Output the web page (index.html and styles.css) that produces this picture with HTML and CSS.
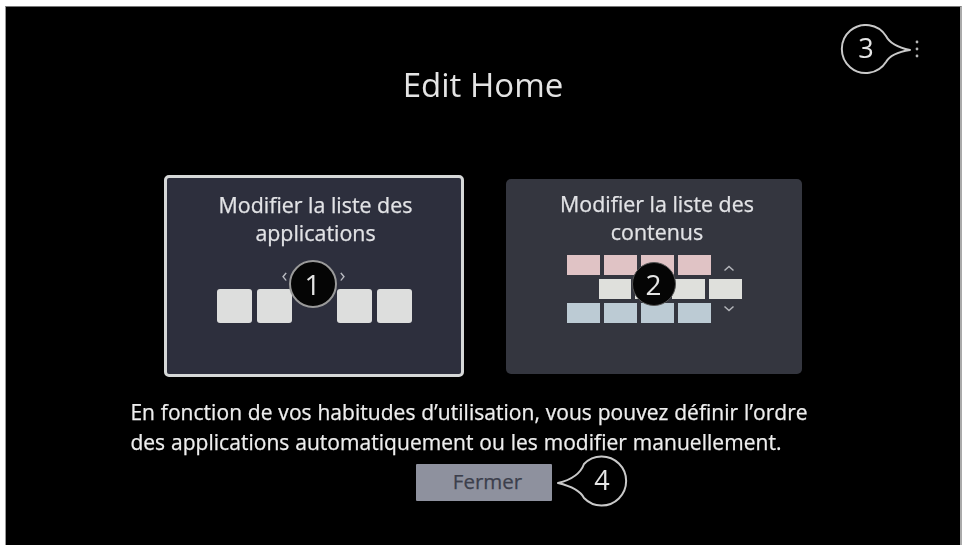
FILE: index.html
```html
<!DOCTYPE html>
<html lang="fr">
<head>
<meta charset="utf-8">
<title>Edit Home</title>
<link rel="stylesheet" href="styles.css">
</head>
<body>
<main class="screen">
  <h1 class="title">Edit Home</h1>
  <svg class="callout callout-three" width="78" height="50" viewBox="0 0 78 50">
    <path class="callout-line" d="M45 12A24 24 0 1 0 45 38Q50 29 69 26Q50 22 45 12Z"/>
    <circle class="dot" cx="76" cy="18" r="1.4"/><circle class="dot" cx="76" cy="25" r="1.4"/><circle class="dot" cx="76" cy="32" r="1.4"/>
    <text class="callout-num" x="25" y="34">3</text>
  </svg>
  <section class="cards">
    <article class="card card-selected">
      <h2 class="card-title">Modifier la liste des<br>applications</h2>
      <div class="apps">
        <span class="tile"></span><span class="tile"></span><span class="tile-gap"></span><span class="tile"></span><span class="tile"></span>
        <span class="arrow arrow-left">‹</span><span class="arrow arrow-right">›</span>
        <span class="badge badge-one">1</span>
      </div>
    </article>
    <article class="card card-plain">
      <h2 class="card-title">Modifier la liste des<br>contenus</h2>
      <div class="rows">
        <div class="row"><span class="cell pink"></span><span class="cell pink"></span><span class="cell pink"></span><span class="cell pink"></span></div>
        <div class="row row-shift"><span class="cell cream"></span><span class="cell cream"></span><span class="cell cream"></span><span class="cell cream"></span></div>
        <div class="row"><span class="cell blue"></span><span class="cell blue"></span><span class="cell blue"></span><span class="cell blue"></span></div>
        <svg class="chev chev-up" width="12" height="7" viewBox="0 0 12 7"><path d="M1.5 5.5L6 1.5L10.5 5.5"/></svg>
        <svg class="chev chev-down" width="12" height="7" viewBox="0 0 12 7"><path d="M1.5 1.5L6 5.5L10.5 1.5"/></svg>
        <span class="badge badge-two">2</span>
      </div>
    </article>
  </section>
  <p class="desc">En fonction de vos habitudes d’utilisation, vous pouvez définir l’ordre<br>des applications automatiquement ou les modifier manuellement.</p>
  <div class="actions">
    <button class="close" type="button">Fermer</button>
    <svg class="callout callout-four" width="78" height="54" viewBox="0 0 78 54">
      <path class="callout-line" d="M25 10A24.5 24.5 0 1 1 25 44Q20 34 -1 29Q20 24 25 10Z"/>
      <text class="callout-num" x="43" y="36">4</text>
    </svg>
  </div>
</main>
</body>
</html>
```
FILE: styles.css
```css
* { box-sizing: border-box; }
html, body { height: 100%; }
body {
  margin: 0;
  padding: 6px 3px 0 5px;
  background: #fff;
  overflow: hidden;
  font-family: "Open Sans", "Noto Sans", sans-serif;
}
.screen {
  position: relative;
  height: 545px;
  display: flex;
  flex-direction: column;
  align-items: center;
  background: #000;
  color: #e4e4e4;
  border-top: 1px solid #777;
  border-left: 1px solid #999;
  border-right: 2px solid #aaa;
}
.title, .cards, .desc, .actions, .callout-three { filter: blur(.45px); }
.title {
  margin: 58px 0 0;
  height: 110px;
  font-size: 33px;
  line-height: 40px;
  font-weight: 400;
}
.cards {
  display: flex;
  align-items: center;
  gap: 42px;
}
.card { display: flex; flex-direction: column; align-items: center; border-radius: 5px; }
.card-selected {
  width: 300px;
  height: 202px;
  padding-top: 13px;
  background: #2d2f3d;
  border: 3px solid #d6d8d8;
}
.card-plain {
  width: 296px;
  height: 195px;
  padding-top: 11px;
  background: #34363f;
}
.card-title {
  margin: 0;
  font-size: 21.4px;
  line-height: 28px;
  font-weight: 400;
  -webkit-text-stroke: .25px #e2e3e6;
  text-align: center;
  color: #e2e3e6;
}
.card-selected .card-title { margin-left: 3px; }
.card-plain .card-title { margin-left: 6px; }
.apps {
  position: relative;
  display: flex;
  gap: 5px;
  margin-top: 42px;
}
.tile { width: 35px; height: 34px; border-radius: 3px; background: #dddedd; }
.tile-gap { width: 35px; }
.arrow { position: absolute; top: -24px; font-size: 20px; line-height: 20px; color: #b9bbc2; }
.arrow-left { left: 65px; }
.arrow-right { left: 123px; }
.badge {
  position: absolute;
  display: flex;
  align-items: center;
  justify-content: center;
  border-radius: 50%;
  background: #050505;
  color: #e4e4e4;
  font-size: 28px;
}
.badge-one { left: 72px; top: -29px; width: 48px; height: 48px; border: 2px solid #9a9a9a; }
.rows { position: relative; display: flex; flex-direction: column; gap: 4px; margin-top: 9px; width: 175px; }
.row { display: flex; gap: 4px; }
.row-shift { margin-left: 32px; }
.cell { width: 33px; height: 20px; }
.pink { background: #e0c3c5; }
.cream { background: #dfe0dc; }
.blue { background: #bccbd4; }
.chev { position: absolute; left: 156px; fill: none; stroke: #b4b6bb; stroke-width: 1.5; }
.chev-up { top: 10px; }
.chev-down { top: 50px; }
.badge-two { left: 65px; top: 7px; width: 44px; height: 44px; border: 1px solid #555; }
.desc {
  margin: 20px 28px 0 0;
  font-size: 21px;
  line-height: 30px;
  font-weight: 400;
  letter-spacing: .04px;
  word-spacing: .3px;
  -webkit-text-stroke: .25px #eeeeee;
  color: #eeeeee;
  text-align: left;
}
.actions { position: relative; margin: 7px 0 0 2px; }
.close {
  display: block;
  width: 136px;
  height: 37px;
  border: 0;
  border-radius: 1px;
  padding: 0 0 4px 7px;
  background: #8e919e;
  color: #3c3f4c;
  font: 400 20.5px "Open Sans", "Noto Sans", sans-serif;
  -webkit-text-stroke: .25px #3c3f4c;
}
.callout { position: absolute; overflow: visible; }
.callout-three { left: 835px; top: 17px; }
.callout-four { left: 143px; top: -10px; }
.callout-line { fill: #000; stroke: #c9c9c9; stroke-width: 2; stroke-linejoin: round; }
.dot { fill: #b5b5b5; }
.callout-num { fill: #e6e6e6; font-size: 27px; text-anchor: middle; }
```
